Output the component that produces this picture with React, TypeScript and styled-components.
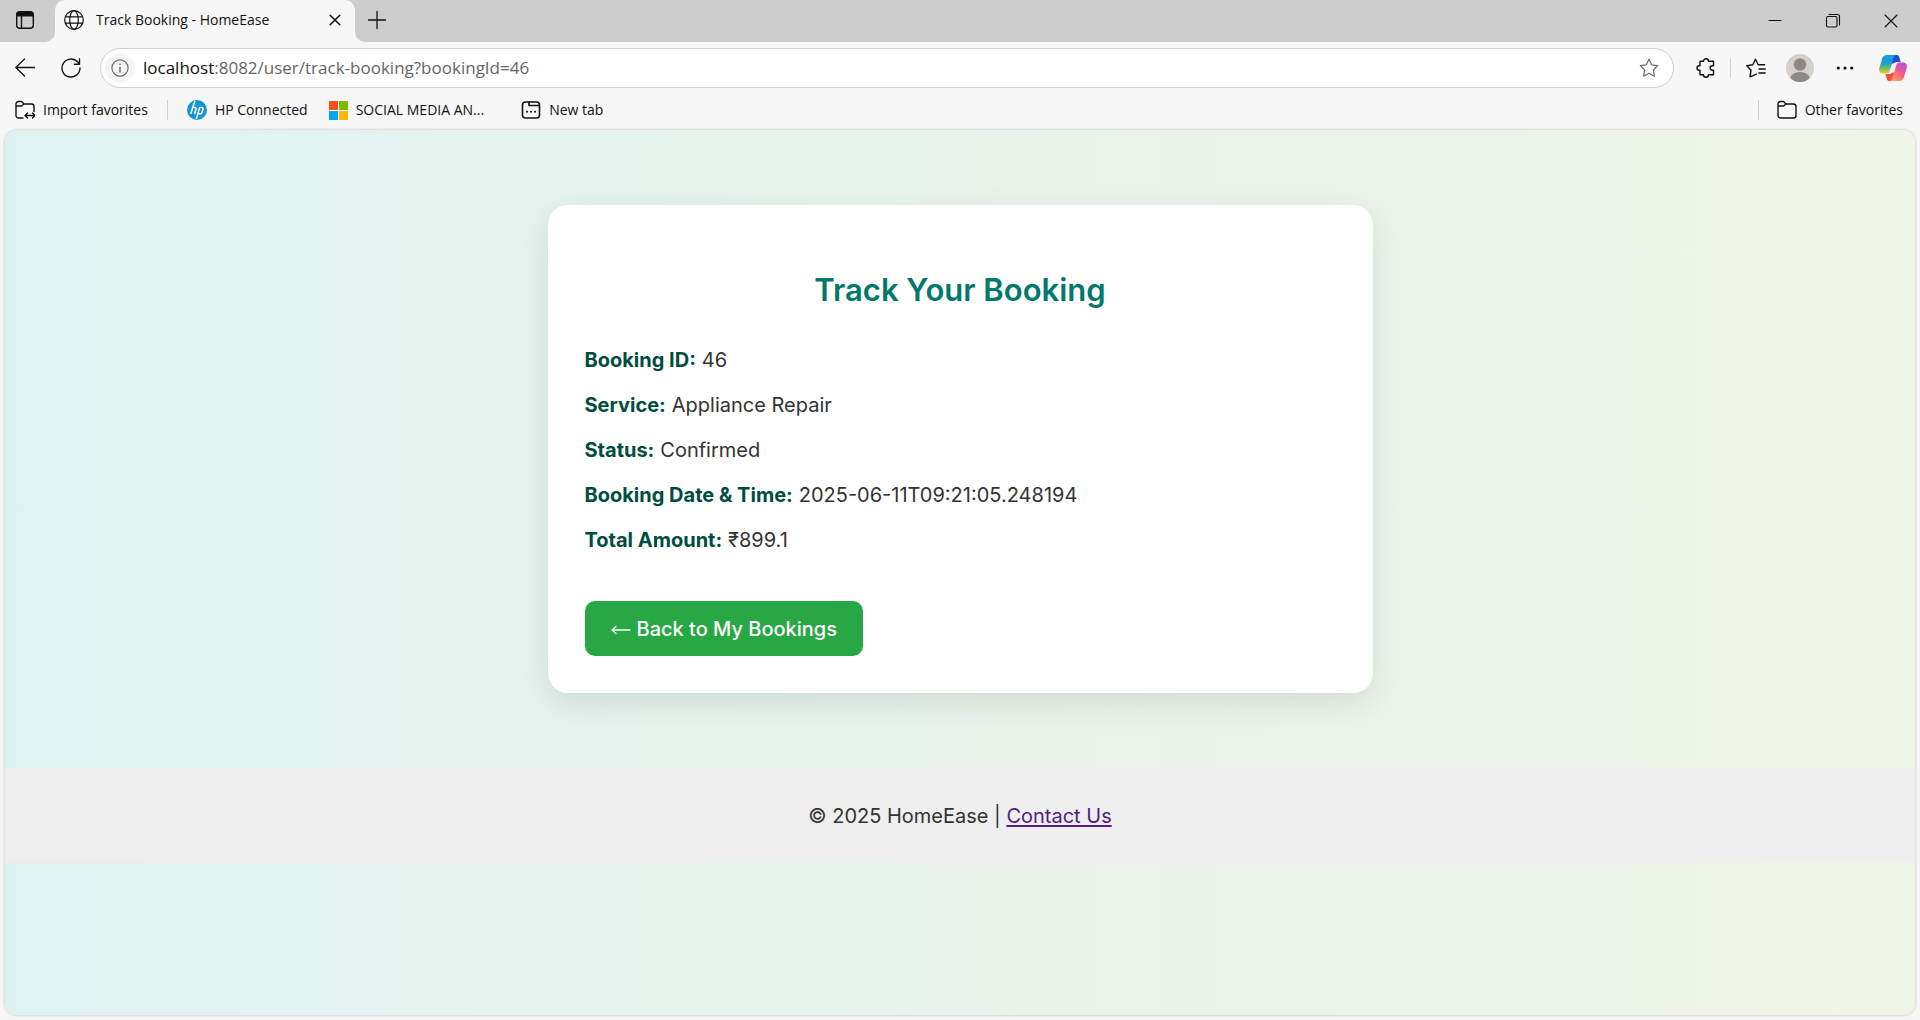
import React from "react";
import styled, { createGlobalStyle } from "styled-components";

const uiFont = `"Open Sans", "Noto Sans", sans-serif`;
const pageFont = `Inter, "Noto Sans", sans-serif`;

const GlobalStyle = createGlobalStyle`
  *, *::before, *::after { box-sizing: border-box; }
  body { margin: 0; background: #f7f7f7; }
`;

const Window = styled.div`
  display: flex;
  flex-direction: column;
  min-height: 100vh;
  font-family: ${uiFont};
  color: #111;
`;

const IconButton = styled.button<{ $w?: number }>`
  display: inline-flex;
  align-items: center;
  justify-content: center;
  flex: none;
  width: ${(p) => p.$w ?? 40}px;
  height: 32px;
  padding: 0;
  border: 0;
  background: transparent;
  color: inherit;
`;

const TabStrip = styled.header`
  display: flex;
  height: 42px;
  background: linear-gradient(#cdcdcd 50%, #f7f7f7 50%);
`;

const StripStart = styled.div`
  display: flex;
  align-items: center;
  width: 55px;
  padding: 0 0 2px 5px;
  background: #cdcdcd;
  border-radius: 0 0 10px 0;
`;

const Tab = styled.div`
  display: flex;
  align-items: center;
  width: 300px;
  padding: 0 4px 2px 9px;
  gap: 12px;
  border-radius: 10px 10px 0 0;
  background: #f7f7f7;
`;

const TabTitle = styled.span`
  flex: 1;
  font-size: 14px;
  line-height: 20px;
  white-space: nowrap;
`;

const StripRest = styled.div`
  display: flex;
  flex: 1;
  align-items: center;
  justify-content: space-between;
  padding: 0 0 2px 2px;
  background: #cdcdcd;
  border-radius: 0 0 0 10px;
`;

const WindowControls = styled.div`
  display: flex;
`;

const Toolbar = styled.div`
  display: flex;
  align-items: center;
  height: 52px;
  padding: 0 1px 0 2px;
`;

const AddressBar = styled.div`
  display: flex;
  flex: 1;
  align-items: center;
  height: 40px;
  margin: 0 12px 0 7px;
  padding: 0 4px;
  border: 1px solid #cfcfcf;
  border-radius: 20px;
  background: #fff;
  color: #6b6b6b;
`;

const SiteInfo = styled(IconButton)`
  width: 30px;
  height: 30px;
  border-radius: 50%;
  background: #f5f5f5;
`;

const Url = styled.a`
  flex: 1;
  padding-left: 8px;
  font-size: 17px;
  line-height: 24px;
  color: #666;
  text-decoration: none;
`;

const Host = styled.span`
  color: #111;
`;

const Divider = styled.span<{ $gap: number }>`
  width: 1px;
  height: 20px;
  margin: 0 ${(p) => p.$gap}px;
  background: #cfcfcf;
`;

const FavoritesBar = styled.nav`
  display: flex;
  align-items: center;
  height: 32px;
  padding: 0 17px 0 15px;
`;

const Favorite = styled.a<{ $after?: number }>`
  display: inline-flex;
  align-items: center;
  gap: 8px;
  margin-right: ${(p) => p.$after ?? 0}px;
  font-size: 14px;
  line-height: 20px;
  color: inherit;
  text-decoration: none;
  white-space: nowrap;
`;

const Spacer = styled.div`
  flex: 1;
`;

const Viewport = styled.main`
  display: flex;
  flex: 1;
  flex-direction: column;
  margin: 4px 5px 5px;
  overflow: hidden;
  border-radius: 12px;
  box-shadow: 0 0 3px rgba(0, 0, 0, 0.25);
  background: linear-gradient(to right, #def2f1, #e8f4eb 50%, #f0f6e7);
  font-family: ${pageFont};
  font-size: 20px;
  line-height: 32px;
  color: #333;
`;

const Card = styled.section`
  width: calc(100% - 40px);
  max-width: 825px;
  margin: 75px auto;
  padding: 63px 37px 37px;
  border-radius: 20px;
  background: #fff;
  box-shadow: 0 10px 32px rgba(0, 0, 0, 0.1);
`;

const Title = styled.h1`
  margin: 0 0 32px;
  font-size: 31px;
  font-weight: 600;
  line-height: 44px;
  text-align: center;
  color: #00796b;
`;

const Details = styled.dl`
  display: grid;
  gap: 13px;
  margin: 0 0 45px;
`;

const Detail = styled.div`
  display: flex;
  flex-wrap: wrap;
  column-gap: 6px;
`;

const Term = styled.dt`
  font-weight: 700;
  color: #004d40;
`;

const Value = styled.dd`
  margin: 0;
`;

const BackLink = styled.a`
  display: inline-flex;
  align-items: center;
  gap: 6px;
  height: 55px;
  padding: 0 26px;
  border-radius: 10px;
  background: #28a745;
  color: #fff;
  font-weight: 500;
  text-decoration: none;
`;

const Footer = styled.footer`
  padding: 32px 20px 31px;
  background: #efefef;
  text-align: center;
`;

const ContactLink = styled.a`
  color: #551a8b;
  text-underline-offset: 2px;
`;

const Line = ({ size = 20, children, w = 1.3 }: { size?: number; w?: number; children: React.ReactNode }) => (
  <svg width={size} height={size} viewBox="0 0 20 20" fill="none" stroke="currentColor" strokeWidth={w} strokeLinecap="round" strokeLinejoin="round" aria-hidden="true">
    {children}
  </svg>
);

const details = [
  ["Booking ID:", "46"],
  ["Service:", "Appliance Repair"],
  ["Status:", "Confirmed"],
  ["Booking Date & Time:", "2025-06-11T09:21:05.248194"],
  ["Total Amount:", "₹899.1"],
];

const starPath = "M10 1.2l2.7 5.6 6 .9-4.3 4.3 1 6.2L10 15.3l-5.4 2.9 1-6.2L1.3 7.7l6-.9z";

export default function App() {
  return (
    <>
      <GlobalStyle />
      <Window>
        <TabStrip>
          <StripStart>
            <IconButton aria-label="Tab actions">
              <Line w={1.4}><rect x="1.7" y="1.7" width="16.600" height="16.600" rx="3" /><path d="M2 3.500h16M2 5h16" strokeWidth="3" strokeLinecap="butt" /><path d="M6.500 6v12" /></Line>
            </IconButton>
          </StripStart>
          <Tab>
            <Line w={1.2}><circle cx="10" cy="10" r="9.3" /><ellipse cx="10" cy="10" rx="4.3" ry="9.3" /><path d="M1.500 6.800h17M1.500 13.200h17" /></Line>
            <TabTitle>Track Booking - HomeEase</TabTitle>
            <IconButton $w={32} aria-label="Close tab"><Line w={1.5}><path d="M5.200 5.200l9.600 9.600M14.800 5.200l-9.600 9.600" /></Line></IconButton>
          </Tab>
          <StripRest>
            <IconButton aria-label="New tab"><Line><path d="M10 1.500v17M1.500 10h17" /></Line></IconButton>
            <WindowControls>
              <IconButton $w={58} aria-label="Minimize"><Line w={1.1}><path d="M4 10.500h12" /></Line></IconButton>
              <IconButton $w={58} aria-label="Restore"><Line w={1.1}><rect x="3.500" y="6.500" width="10.500" height="10.500" rx="1.500" /><path d="M6 4.500h8.500a2 2 0 0 1 2 2V15" /></Line></IconButton>
              <IconButton $w={58} aria-label="Close"><Line w={1.1}><path d="M4 5l12 12M16 5L4 17" /></Line></IconButton>
            </WindowControls>
          </StripRest>
        </TabStrip>
        <Toolbar>
          <IconButton $w={46} aria-label="Back"><Line><path d="M19.500 9.500H.8M9.500 1L.8 9.500l8.700 8.500" /></Line></IconButton>
          <IconButton $w={45} aria-label="Refresh"><Line w={1.4}><path d="M19 10A9 9 0 1 1 16.500 3.800L18.500 6M18.500 1v5.200h-5.200" /></Line></IconButton>
          <AddressBar>
            <SiteInfo aria-label="Site information"><Line size={18}><circle cx="10" cy="10" r="9" /><path d="M10 9v5.500M10 5.500v.6" strokeWidth="1.6" /></Line></SiteInfo>
            <Url href="#"><Host>localhost</Host>:8082/user/track-booking?bookingId=46</Url>
            <IconButton aria-label="Add to favorites"><Line w={1.2}><path d={starPath} /></Line></IconButton>
          </AddressBar>
          <IconButton aria-label="Extensions">
            <Line w={1.4}><path d="M4 3.200h3.500a2.500 2.500 0 0 1 5 0H17.500v4.600h-1.200a2.200 2.200 0 0 0 0 4.400h1.200v4.600h-5a2.500 2.500 0 0 1-5 0H4v-4.600H3.200a2.200 2.200 0 0 1 0-4.400H4z" /></Line>
          </IconButton>
          <Divider $gap={4} />
          <IconButton $w={42} aria-label="Favorites"><Line w={1.4}><path d="M10.500 16.200L4 18.800l1-6.500L.8 7.700l6-.9L9.500 1.200l2.700 5.600h6.500M13 11h6.200M13 15h6.200" /></Line></IconButton>
          <IconButton $w={46} aria-label="Profile">
            <svg width="28" height="28" viewBox="0 0 28 28" aria-hidden="true"><clipPath id="avatar"><circle cx="14" cy="14" r="14" /></clipPath><g clipPath="url(#avatar)"><path fill="#d4d1cd" d="M0 0h28v28H0z" /><circle cx="14" cy="10.5" r="6.2" fill="#8d8884" /><ellipse cx="14" cy="25" rx="10" ry="7" fill="#8d8884" /></g></svg>
          </IconButton>
          <IconButton $w={44} aria-label="Settings and more"><Line><g fill="currentColor" stroke="none"><circle cx="3.3" cy="10" r="1.6" /><circle cx="10" cy="10" r="1.6" /><circle cx="16.7" cy="10" r="1.6" /></g></Line></IconButton>
          <IconButton $w={52} aria-label="Copilot">
            <svg width="28" height="28" viewBox="0 0 28 28" aria-hidden="true">
              <defs>
                <linearGradient id="cool" x1="0" y1="0" x2="0" y2="1"><stop stopColor="#149bf0" /><stop offset=".45" stopColor="#1f9fcc" /><stop offset=".75" stopColor="#7cc355" /><stop offset="1" stopColor="#f6ca22" /></linearGradient>
                <linearGradient id="warm" x1="1" y1="0" x2="0.2" y2="1"><stop stopColor="#a44df0" /><stop offset=".5" stopColor="#f0598e" /><stop offset="1" stopColor="#ffab52" /></linearGradient>
              </defs>
              <path d="M12 1h5.800c1.700 0 2.200 1.200 2.700 3l1.200 4h-3.200c-2 0-3 .5-4 1.500h-3z" fill="#1b4fd0" />
              <path d="M16 27h-5.800c-1.700 0-2.200-1.200-2.700-3l-1.200-4h3.200c2 0 3-.5 4-1.500h3z" fill="#f0503c" />
              <path d="M8 1h9.500c-2 0-2.700 2-3.300 4L11 16c-.6 2-1.500 3.500-3.500 3.500H4c-3.500 0-4.500-2.500-3.500-6L3 5C3.800 2.500 5.500 1 8 1z" fill="url(#cool)" />
              <path d="M20 27h-9.500c2 0 2.700-2 3.300-4L17 12c.6-2 1.500-3.500 3.500-3.500H24c3.500 0 4.500 2.500 3.500 6L25 23c-.8 2.500-2.500 4-5 4z" fill="url(#warm)" />
            </svg>
          </IconButton>
        </Toolbar>
        <FavoritesBar aria-label="Favorites">
          <Favorite href="#">
            <Line w={1.4}><path d="M8 18H3.500A2.500 2.500 0 0 1 1 15.500V4a2.500 2.500 0 0 1 2.500-2.500h3L9 4h7.500A2.500 2.500 0 0 1 19 6.500v5M1 6h5.500L9 4M10.500 15.500h9M12.500 13l-2.500 2.500 2.500 2.500M17.500 13l2.500 2.500-2.500 2.500" /></Line>
            Import favorites
          </Favorite>
          <Divider $gap={19} />
          <Favorite href="#" $after={21}>
            <svg width="20" height="20" viewBox="0 0 20 20" aria-hidden="true"><circle cx="10" cy="10" r="10" fill="#0e96d8" /><g fill="none" stroke="#fff" strokeWidth="1.5"><path d="M7.800 1L3.700 14M5.600 7.500h2.200q1.600 0 1.200 1.500L7.600 14M12.800 7L9.300 19M12.600 7.500h2.200q1.600 0 1.200 1.500l-1.100 3.700q-.3 1-1.500 1h-2.300" /></g></svg>
            HP Connected
          </Favorite>
          <Favorite href="#" $after={37}>
            <svg width="19" height="19" viewBox="0 0 20 20" aria-hidden="true"><path fill="#f6511d" d="M0 0h9.500v9.500H0z" /><path fill="#7fba00" d="M10.500 0H20v9.500h-9.500z" /><path fill="#00a4ef" d="M0 10.500h9.500V20H0z" /><path fill="#ffb900" d="M10.500 10.500H20V20h-9.500z" /></svg>
            SOCIAL MEDIA AN...
          </Favorite>
          <Favorite href="#">
            <Line w={1.6}><rect x="1.5" y="2" width="17" height="16" rx="3" /><path d="M8 2v3.500h10" /><path d="M6 11.800h.1M10 11.800h.1M14 11.800h.1" strokeWidth="2" /></Line>
            New tab
          </Favorite>
          <Spacer />
          <Divider $gap={18} />
          <Favorite href="#">
            <Line w={1.4}><path d="M1 6V4a2.500 2.500 0 0 1 2.500-2.500h3L9 4h7.500A2.500 2.500 0 0 1 19 6.500v9a2.500 2.500 0 0 1-2.500 2.500h-13A2.500 2.500 0 0 1 1 15.500V6h5.500L9 4" /></Line>
            Other favorites
          </Favorite>
        </FavoritesBar>
        <Viewport>
          <Card>
            <Title>Track Your Booking</Title>
            <Details>
              {details.map(([term, value]) => (
                <Detail key={term}><Term>{term}</Term><Value>{value}</Value></Detail>
              ))}
            </Details>
            <BackLink href="#">
              <Line><path d="M19 11H1M5 7.500L1 11l4 3.500" /></Line>
              Back to My Bookings
            </BackLink>
          </Card>
          <Footer>© 2025 HomeEase | <ContactLink href="#">Contact Us</ContactLink></Footer>
        </Viewport>
      </Window>
    </>
  );
}
